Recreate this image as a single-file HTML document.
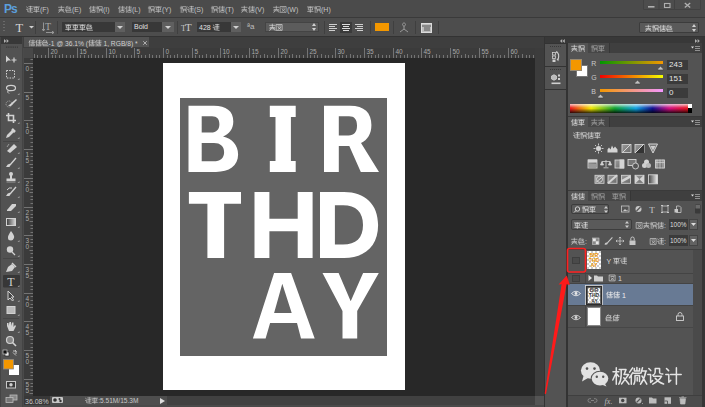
<!DOCTYPE html><html><head><meta charset="utf-8"><style>
html,body{margin:0;padding:0;width:705px;height:407px;overflow:hidden;background:#4a4a4a;font-family:"Liberation Sans",sans-serif;}
div,span,svg{position:absolute;}
span{white-space:nowrap;line-height:1;}
</style></head><body>
<div style="left:0px;top:0px;width:705px;height:17px;background:#4b4b4b;"></div>
<div style="left:0px;top:17px;width:705px;height:1px;background:#3a3a3a;"></div>
<span style="left:4px;top:2.5px;font-size:12px;color:#5b9fdc;font-weight:bold;letter-spacing:-1px;">Ps</span>
<svg style="left:0;top:0" width="705" height="407"><path transform="translate(26.00,5.98) scale(0.665)" d="M1 1.6 L2.4 2.8 M0.8 5 H2.6 V8.6 L9.6 9.6 M4.4 1 H9.4 M4.4 3.6 H9.4 M6.8 0.6 V8 M4.4 6 H9.4" fill="none" stroke="#c4c4c4" stroke-width="1.0" stroke-linecap="square"/><path transform="translate(33.00,5.98) scale(0.665)" d="M0.8 1.4 H9.4 M2 3.2 V6 H8.2 V3.2 Z M5 1.4 V9.6 M1.2 8.2 H9" fill="none" stroke="#c4c4c4" stroke-width="1.0" stroke-linecap="square"/><text x="40.00" y="12" font-size="7" font-family="Liberation Sans" fill="#c4c4c4" xml:space="preserve">(F)</text></svg>
<svg style="left:0;top:0" width="705" height="407"><path transform="translate(58.00,5.98) scale(0.665)" d="M1 2 H9 M5 0.4 V5.2 M1.8 5.2 H8.2 M3.2 7 L1.2 9.6 M6.8 7 L9 9.6 M1.4 7.2 H8.6" fill="none" stroke="#c4c4c4" stroke-width="1.0" stroke-linecap="square"/><path transform="translate(65.00,5.98) scale(0.665)" d="M3.4 0.4 L1 3 M2.6 1.8 H8 L6.8 4.2 M1.8 4.4 H8.6 V7 H1.8 Z M1.8 7 V9.4 H9.6" fill="none" stroke="#c4c4c4" stroke-width="1.0" stroke-linecap="square"/><text x="72.00" y="12" font-size="7" font-family="Liberation Sans" fill="#c4c4c4" xml:space="preserve">(E)</text></svg>
<svg style="left:0;top:0" width="705" height="407"><path transform="translate(89.00,5.98) scale(0.665)" d="M2.6 0.8 L1 3.8 M2 2.8 V9.6 M4.2 1.8 H9.6 M4.2 4.6 H9.6 M4.8 6.8 H9.2 V9.4 H4.8 Z M7 0.6 V6.8" fill="none" stroke="#c4c4c4" stroke-width="1.0" stroke-linecap="square"/><path transform="translate(96.00,5.98) scale(0.665)" d="M1.8 0.6 V9.6 M0.6 3 H3.2 M4.4 1 H9.4 V4.8 H4.4 Z M4.4 6.2 H9.6 M5.2 6.2 L4.4 9.6 M8.6 6.2 L9.6 9.6" fill="none" stroke="#c4c4c4" stroke-width="1.0" stroke-linecap="square"/><text x="103.00" y="12" font-size="7" font-family="Liberation Sans" fill="#c4c4c4" xml:space="preserve">(I)</text></svg>
<svg style="left:0;top:0" width="705" height="407"><path transform="translate(118.00,5.98) scale(0.665)" d="M2.6 0.8 L1 3.8 M2 2.8 V9.6 M4.2 1.8 H9.6 M4.2 4.6 H9.6 M4.8 6.8 H9.2 V9.4 H4.8 Z M7 0.6 V6.8" fill="none" stroke="#c4c4c4" stroke-width="1.0" stroke-linecap="square"/><path transform="translate(125.00,5.98) scale(0.665)" d="M2.6 0.8 L1 3.8 M2 2.8 V9.6 M4.2 1.8 H9.6 M4.2 4.6 H9.6 M4.8 6.8 H9.2 V9.4 H4.8 Z M7 0.6 V6.8" fill="none" stroke="#c4c4c4" stroke-width="1.0" stroke-linecap="square"/><text x="132.00" y="12" font-size="7" font-family="Liberation Sans" fill="#c4c4c4" xml:space="preserve">(L)</text></svg>
<svg style="left:0;top:0" width="705" height="407"><path transform="translate(148.00,5.98) scale(0.665)" d="M1.8 0.6 V9.6 M0.6 3 H3.2 M4.4 1 H9.4 V4.8 H4.4 Z M4.4 6.2 H9.6 M5.2 6.2 L4.4 9.6 M8.6 6.2 L9.6 9.6" fill="none" stroke="#c4c4c4" stroke-width="1.0" stroke-linecap="square"/><path transform="translate(155.00,5.98) scale(0.665)" d="M0.8 1.4 H9.4 M2 3.2 V6 H8.2 V3.2 Z M5 1.4 V9.6 M1.2 8.2 H9" fill="none" stroke="#c4c4c4" stroke-width="1.0" stroke-linecap="square"/><text x="162.00" y="12" font-size="7" font-family="Liberation Sans" fill="#c4c4c4" xml:space="preserve">(Y)</text></svg>
<svg style="left:0;top:0" width="705" height="407"><path transform="translate(180.00,5.98) scale(0.665)" d="M1.8 0.6 V9.6 M0.6 3 H3.2 M4.4 1 H9.4 V4.8 H4.4 Z M4.4 6.2 H9.6 M5.2 6.2 L4.4 9.6 M8.6 6.2 L9.6 9.6" fill="none" stroke="#c4c4c4" stroke-width="1.0" stroke-linecap="square"/><path transform="translate(187.00,5.98) scale(0.665)" d="M1 1.6 L2.4 2.8 M0.8 5 H2.6 V8.6 L9.6 9.6 M4.4 1 H9.4 M4.4 3.6 H9.4 M6.8 0.6 V8 M4.4 6 H9.4" fill="none" stroke="#c4c4c4" stroke-width="1.0" stroke-linecap="square"/><text x="194.00" y="12" font-size="7" font-family="Liberation Sans" fill="#c4c4c4" xml:space="preserve">(S)</text></svg>
<svg style="left:0;top:0" width="705" height="407"><path transform="translate(211.00,5.98) scale(0.665)" d="M1.8 0.6 V9.6 M0.6 3 H3.2 M4.4 1 H9.4 V4.8 H4.4 Z M4.4 6.2 H9.6 M5.2 6.2 L4.4 9.6 M8.6 6.2 L9.6 9.6" fill="none" stroke="#c4c4c4" stroke-width="1.0" stroke-linecap="square"/><path transform="translate(218.00,5.98) scale(0.665)" d="M2.6 0.8 L1 3.8 M2 2.8 V9.6 M4.2 1.8 H9.6 M4.2 4.6 H9.6 M4.8 6.8 H9.2 V9.4 H4.8 Z M7 0.6 V6.8" fill="none" stroke="#c4c4c4" stroke-width="1.0" stroke-linecap="square"/><text x="225.00" y="12" font-size="7" font-family="Liberation Sans" fill="#c4c4c4" xml:space="preserve">(T)</text></svg>
<svg style="left:0;top:0" width="705" height="407"><path transform="translate(241.00,5.98) scale(0.665)" d="M1 2 H9 M5 0.4 V5.2 M1.8 5.2 H8.2 M3.2 7 L1.2 9.6 M6.8 7 L9 9.6 M1.4 7.2 H8.6" fill="none" stroke="#c4c4c4" stroke-width="1.0" stroke-linecap="square"/><path transform="translate(248.00,5.98) scale(0.665)" d="M2.6 0.8 L1 3.8 M2 2.8 V9.6 M4.2 1.8 H9.6 M4.2 4.6 H9.6 M4.8 6.8 H9.2 V9.4 H4.8 Z M7 0.6 V6.8" fill="none" stroke="#c4c4c4" stroke-width="1.0" stroke-linecap="square"/><text x="255.00" y="12" font-size="7" font-family="Liberation Sans" fill="#c4c4c4" xml:space="preserve">(V)</text></svg>
<svg style="left:0;top:0" width="705" height="407"><path transform="translate(273.00,5.98) scale(0.665)" d="M1 2 H9 M5 0.4 V5.2 M1.8 5.2 H8.2 M3.2 7 L1.2 9.6 M6.8 7 L9 9.6 M1.4 7.2 H8.6" fill="none" stroke="#c4c4c4" stroke-width="1.0" stroke-linecap="square"/><path transform="translate(280.00,5.98) scale(0.665)" d="M1 0.8 H9.2 V9.6 H1 Z M3 3 H7.2 M3.2 5 L7 8 M7 5 L3.2 8" fill="none" stroke="#c4c4c4" stroke-width="1.0" stroke-linecap="square"/><text x="287.00" y="12" font-size="7" font-family="Liberation Sans" fill="#c4c4c4" xml:space="preserve">(W)</text></svg>
<svg style="left:0;top:0" width="705" height="407"><path transform="translate(307.00,5.98) scale(0.665)" d="M0.8 1.4 H9.4 M2 3.2 V6 H8.2 V3.2 Z M5 1.4 V9.6 M1.2 8.2 H9" fill="none" stroke="#c4c4c4" stroke-width="1.0" stroke-linecap="square"/><path transform="translate(314.00,5.98) scale(0.665)" d="M1.8 0.6 V9.6 M0.6 3 H3.2 M4.4 1 H9.4 V4.8 H4.4 Z M4.4 6.2 H9.6 M5.2 6.2 L4.4 9.6 M8.6 6.2 L9.6 9.6" fill="none" stroke="#c4c4c4" stroke-width="1.0" stroke-linecap="square"/><text x="321.00" y="12" font-size="7" font-family="Liberation Sans" fill="#c4c4c4" xml:space="preserve">(H)</text></svg>
<svg style="left:640px;top:0px" width="65" height="12"><path d="M3.5 0 V9.5 H60.5 V0 M19 0 V9.5 M34.5 0 V9.5" fill="#4d4d4d" stroke="#424242" stroke-width="1"/><g fill="none" stroke="#b0b0b0" stroke-width="1"><line x1="8" y1="6.8" x2="14.5" y2="6.8" stroke-width="1.6"/><rect x="24.5" y="3.5" width="5.5" height="4" stroke-width="1.1"/><path d="M44.8 3 L50.2 7.6 M50.2 3 L44.8 7.6" stroke-width="1.3"/></g></svg>
<div style="left:0px;top:18px;width:705px;height:18px;background:#4d4d4d;"></div>
<div style="left:0px;top:36px;width:705px;height:1px;background:#333333;"></div>
<svg style="left:3px;top:20px" width="3" height="14"><g fill="#6a6a6a"><rect x="0" y="1" width="2" height="1"/><rect x="0" y="4" width="2" height="1"/><rect x="0" y="7" width="2" height="1"/><rect x="0" y="10" width="2" height="1"/></g></svg>
<span style="left:15.5px;top:21.5px;font-size:12.5px;color:#d4d4d4;font-family:'Liberation Serif';">T</span>
<svg style="left:28.5px;top:25.5px" width="5" height="3"><path d="M0 0H5L2.5 2.5Z" fill="#cfcfcf"/></svg>
<div style="left:35px;top:21px;width:1px;height:13px;background:#3f3f3f;"></div>
<span style="left:45px;top:22px;font-size:10px;color:#a8a8a8;font-family:'Liberation Serif';">T</span>
<svg style="left:41px;top:22px" width="14" height="12"><path d="M2.5 0.5V8.5 M1.2 7L2.5 9L3.8 7 M5 10.5H12.5 M11 9.2L13 10.5L11 11.8" stroke="#a8a8a8" fill="none" stroke-width="0.8"/></svg>
<div style="left:57px;top:21px;width:1px;height:13px;background:#3f3f3f;"></div>
<div style="left:62px;top:22px;width:53px;height:10px;background:#383838;"></div>
<svg style="left:0;top:0" width="705" height="407"><path transform="translate(65.00,23.98) scale(0.665)" d="M0.8 1.4 H9.4 M2 3.2 V6 H8.2 V3.2 Z M5 1.4 V9.6 M1.2 8.2 H9" fill="none" stroke="#e0e0e0" stroke-width="1.0" stroke-linecap="square"/><path transform="translate(72.00,23.98) scale(0.665)" d="M0.8 1.4 H9.4 M2 3.2 V6 H8.2 V3.2 Z M5 1.4 V9.6 M1.2 8.2 H9" fill="none" stroke="#e0e0e0" stroke-width="1.0" stroke-linecap="square"/><path transform="translate(79.00,23.98) scale(0.665)" d="M0.8 1.4 H9.4 M2 3.2 V6 H8.2 V3.2 Z M5 1.4 V9.6 M1.2 8.2 H9" fill="none" stroke="#e0e0e0" stroke-width="1.0" stroke-linecap="square"/><path transform="translate(86.00,23.98) scale(0.665)" d="M3.4 0.4 L1 3 M2.6 1.8 H8 L6.8 4.2 M1.8 4.4 H8.6 V7 H1.8 Z M1.8 7 V9.4 H9.6" fill="none" stroke="#e0e0e0" stroke-width="1.0" stroke-linecap="square"/></svg>
<div style="left:115px;top:22px;width:10px;height:10px;background:#5f5f5f;"></div>
<svg style="left:117px;top:26px" width="6" height="3"><path d="M0 0H6L3 3Z" fill="#d0d0d0"/></svg>
<div style="left:132px;top:22px;width:30px;height:10px;background:#383838;"></div>
<span style="left:134px;top:23px;font-size:7px;color:#e0e0e0;">Bold</span>
<div style="left:162px;top:22px;width:12px;height:10px;background:#5f5f5f;"></div>
<svg style="left:165px;top:26px" width="6" height="3"><path d="M0 0H6L3 3Z" fill="#d0d0d0"/></svg>
<div style="left:177px;top:21px;width:1px;height:13px;background:#3f3f3f;"></div>
<span style="left:181px;top:25px;font-size:8px;color:#c8c8c8;font-family:'Liberation Serif';">T</span>
<span style="left:185px;top:21.5px;font-size:11px;color:#c8c8c8;font-family:'Liberation Serif';">T</span>
<div style="left:197px;top:22px;width:34px;height:10px;background:#383838;"></div>
<svg style="left:0;top:0" width="705" height="407"><text x="199.00" y="30" font-size="7" font-family="Liberation Sans" fill="#e0e0e0" xml:space="preserve">428 </text><path transform="translate(212.62,23.98) scale(0.665)" d="M1 1.6 L2.4 2.8 M0.8 5 H2.6 V8.6 L9.6 9.6 M4.4 1 H9.4 M4.4 3.6 H9.4 M6.8 0.6 V8 M4.4 6 H9.4" fill="none" stroke="#e0e0e0" stroke-width="1.0" stroke-linecap="square"/></svg>
<div style="left:231px;top:22px;width:10px;height:10px;background:#5f5f5f;"></div>
<svg style="left:233px;top:26px" width="6" height="3"><path d="M0 0H6L3 3Z" fill="#d0d0d0"/></svg>
<span style="left:247px;top:23px;font-size:8px;color:#bdbdbd;">ªa</span>
<div style="left:265px;top:22px;width:54px;height:10px;background:#5c5c5c;border:1px solid #444;box-sizing:border-box;"></div>
<svg style="left:0;top:0" width="705" height="407"><path transform="translate(269.00,23.98) scale(0.665)" d="M1 2 H9 M5 0.4 V5.2 M1.8 5.2 H8.2 M3.2 7 L1.2 9.6 M6.8 7 L9 9.6 M1.4 7.2 H8.6" fill="none" stroke="#e0e0e0" stroke-width="1.0" stroke-linecap="square"/><path transform="translate(276.00,23.98) scale(0.665)" d="M1 0.8 H9.2 V9.6 H1 Z M3 3 H7.2 M3.2 5 L7 8 M7 5 L3.2 8" fill="none" stroke="#e0e0e0" stroke-width="1.0" stroke-linecap="square"/></svg>
<svg style="left:312px;top:23px" width="4" height="8"><path d="M0 3L2 0L4 3Z M0 5L2 8L4 5Z" fill="#d0d0d0"/></svg>
<div style="left:324px;top:21px;width:1px;height:13px;background:#3f3f3f;"></div>
<svg style="left:328px;top:22px" width="40" height="11"><g stroke="#cfcfcf" stroke-width="1"><path d="M1 2.5H9 M1 4.5H7 M1 6.5H9 M1 8.5H7"/></g><rect x="12" y="0" width="12" height="11" fill="#3a3a3a"/><g stroke="#dcdcdc"><path d="M14 2.5H22 M15 4.5H21 M14 6.5H22 M15 8.5H21"/></g><g stroke="#cfcfcf"><path d="M27 2.5H35 M29 4.5H35 M27 6.5H35 M29 8.5H35"/></g></svg>
<div style="left:370px;top:21px;width:1px;height:13px;background:#3f3f3f;"></div>
<div style="left:375px;top:23px;width:14px;height:8px;background:#f39700;"></div>
<div style="left:393px;top:21px;width:1px;height:13px;background:#3f3f3f;"></div>
<svg style="left:399px;top:22px" width="11" height="11"><path d="M5 1C3 1 3 4 5 4C7 4 7 1 5 1 M5 4V7 M1 10L5 7L9 10" stroke="#9a9a9a" fill="none"/></svg>
<div style="left:415px;top:21px;width:1px;height:13px;background:#3f3f3f;"></div>
<svg style="left:421px;top:22px" width="11" height="11"><rect x="0.5" y="1.5" width="10" height="9" fill="#bdbdbd" stroke="#dcdcdc"/><path d="M1 4H10 M3 6H9 M3 8H9" stroke="#555"/></svg>
<div style="left:438px;top:21px;width:1px;height:13px;background:#3f3f3f;"></div>
<div style="left:639px;top:22px;width:60px;height:11px;background:#5a5a5a;border:1px solid #3c3c3c;box-sizing:border-box;border-radius:1px;"></div>
<svg style="left:0;top:0" width="705" height="407"><path transform="translate(645.00,24.98) scale(0.665)" d="M1 2 H9 M5 0.4 V5.2 M1.8 5.2 H8.2 M3.2 7 L1.2 9.6 M6.8 7 L9 9.6 M1.4 7.2 H8.6" fill="none" stroke="#e0e0e0" stroke-width="1.0" stroke-linecap="square"/><path transform="translate(652.00,24.98) scale(0.665)" d="M1.8 0.6 V9.6 M0.6 3 H3.2 M4.4 1 H9.4 V4.8 H4.4 Z M4.4 6.2 H9.6 M5.2 6.2 L4.4 9.6 M8.6 6.2 L9.6 9.6" fill="none" stroke="#e0e0e0" stroke-width="1.0" stroke-linecap="square"/><path transform="translate(659.00,24.98) scale(0.665)" d="M2.6 0.8 L1 3.8 M2 2.8 V9.6 M4.2 1.8 H9.6 M4.2 4.6 H9.6 M4.8 6.8 H9.2 V9.4 H4.8 Z M7 0.6 V6.8" fill="none" stroke="#e0e0e0" stroke-width="1.0" stroke-linecap="square"/><path transform="translate(666.00,24.98) scale(0.665)" d="M3.4 0.4 L1 3 M2.6 1.8 H8 L6.8 4.2 M1.8 4.4 H8.6 V7 H1.8 Z M1.8 7 V9.4 H9.6" fill="none" stroke="#e0e0e0" stroke-width="1.0" stroke-linecap="square"/></svg>
<svg style="left:692px;top:24px" width="4" height="8"><path d="M0 3L2 0L4 3Z M0 5L2 8L4 5Z" fill="#d0d0d0"/></svg>
<div style="left:0px;top:37px;width:23px;height:370px;background:#444444;"></div>
<div style="left:1px;top:37px;width:21px;height:7px;background:#383838;"></div>
<svg style="left:3.5px;top:38.5px" width="5" height="4"><path d="M2.2 2 L0 0 V4Z M4.8 2 L2.6 0 V4Z" fill="#b0b0b0"/></svg>
<div style="left:1px;top:44px;width:21px;height:363px;background:#525252;"></div>
<svg style="left:5px;top:45.5px" width="14" height="3"><g stroke="#3a3a3a" stroke-width="1.3" stroke-dasharray="1.3 0.9"><path d="M1 1.2 H13"/></g></svg>
<svg style="left:0;top:0" width="23" height="407"><path d="M6 55.5 L6 62.5 L8 60.5 L11 60.5 Z" fill="#d2d2d2"/><path d="M11.5 60 h5 M14 57.5 v5" stroke="#d2d2d2" stroke-width="1.2"/><rect x="6.5" y="70.5" width="8" height="7.5" fill="none" stroke="#d2d2d2" stroke-dasharray="1.5 1.2"/><path d="M17.5 80 h2 v-2 z" fill="#9a9a9a"/><ellipse cx="11" cy="88" rx="4.5" ry="2.7" fill="none" stroke="#d2d2d2" stroke-width="1.2"/><path d="M8 90.5 q-1 2 1 3" fill="none" stroke="#d2d2d2"/><path d="M17.5 95 h2 v-2 z" fill="#9a9a9a"/><circle cx="9" cy="104" r="3" fill="none" stroke="#aaa" stroke-dasharray="1 1"/><path d="M8 106 L16 99 L17 100 L11 106 Z" fill="#d2d2d2"/><path d="M17.5 109 h2 v-2 z" fill="#9a9a9a"/><path d="M8.5 113 V120.5 H16 M6 115.5 H13.5 V123" fill="none" stroke="#d2d2d2" stroke-width="1.6"/><path d="M17.5 124 h2 v-2 z" fill="#9a9a9a"/><path d="M6 138 L7 135 L12 130 L14 132 L9 137 Z" fill="#d2d2d2"/><path d="M12 129 L15 132" stroke="#d2d2d2" stroke-width="2.5"/><path d="M17.5 139 h2 v-2 z" fill="#9a9a9a"/><rect x="3" y="141" width="16" height="1" fill="#464646"/><path d="M7 151 L14 144 L17 147 L10 153 Z" fill="#d2d2d2"/><path d="M7 147 L9 144" stroke="#999"/><path d="M17.5 154 h2 v-2 z" fill="#9a9a9a"/><path d="M16 158 L10 165" stroke="#d2d2d2" stroke-width="1.3"/><path d="M6 167 Q8 163 11 164 L9.5 167 Z" fill="#d2d2d2"/><path d="M17.5 169 h2 v-2 z" fill="#9a9a9a"/><circle cx="11" cy="174" r="2" fill="#d2d2d2"/><rect x="10" y="175" width="2" height="4" fill="#d2d2d2"/><rect x="6.5" y="178.5" width="9" height="2.5" fill="#d2d2d2"/><rect x="6.5" y="181.5" width="9" height="1" fill="#999"/><path d="M17.5 183 h2 v-2 z" fill="#9a9a9a"/><path d="M16 187 L10 194" stroke="#d2d2d2" stroke-width="1.3"/><path d="M6 196 Q8 192 11 193 L9.5 196 Z" fill="#d2d2d2"/><path d="M7 190 q2 -3 5 -2" fill="none" stroke="#d2d2d2"/><path d="M17.5 198 h2 v-2 z" fill="#9a9a9a"/><path d="M7 210 L12 204 L16 204 L16 206 L11 211 L7 211 Z" fill="#d2d2d2"/><path d="M17.5 213 h2 v-2 z" fill="#9a9a9a"/><defs><linearGradient id="gr" x1="0" x2="1"><stop offset="0" stop-color="#3a3a3a"/><stop offset="1" stop-color="#dadada"/></linearGradient></defs><rect x="6.5" y="218.5" width="9" height="7" fill="url(#gr)" stroke="#d2d2d2"/><path d="M17.5 228 h2 v-2 z" fill="#9a9a9a"/><path d="M11 231 Q15 236 14 238 Q13 240.5 11 240.5 Q8 240.5 8 238 Q7.5 236 11 231 Z" fill="#d2d2d2"/><path d="M17.5 242 h2 v-2 z" fill="#9a9a9a"/><circle cx="10" cy="249.5" r="3.2" fill="#d2d2d2"/><path d="M12 252 L15 255" stroke="#d2d2d2" stroke-width="1.3"/><path d="M17.5 257 h2 v-2 z" fill="#9a9a9a"/><rect x="3" y="258" width="16" height="1" fill="#464646"/><path d="M6 272 L8 267 L12 264 L15 267 L12 271 Z" fill="#d2d2d2"/><path d="M12 263 L16 267" stroke="#d2d2d2" stroke-width="1.5"/><path d="M17.5 273 h2 v-2 z" fill="#9a9a9a"/><rect x="3" y="275" width="17" height="12.5" fill="#373737" rx="1"/><text x="11" y="285.5" font-size="12" font-family="Liberation Serif" fill="#d2d2d2" text-anchor="middle">T</text><path d="M17.5 287 h2 v-2 z" fill="#9a9a9a"/><path d="M8 291 L8 300 L10 298 L12.5 301 L13.5 300 L11.5 297 L14 297 Z" fill="#444" stroke="#d2d2d2"/><path d="M17.5 302 h2 v-2 z" fill="#9a9a9a"/><rect x="7" y="306.5" width="8" height="7" fill="#bbb" stroke="#d2d2d2"/><path d="M17.5 316 h2 v-2 z" fill="#9a9a9a"/><rect x="3" y="318" width="16" height="1" fill="#464646"/><path d="M7 326 L7 323 L8.5 323 L8.5 326 L9.5 322 L11 322 L11 326 L12 322.5 L13.5 322.5 L13.5 327 L15 325 L16 326 L13.5 331 L9 331 Z" fill="#d2d2d2"/><path d="M17.5 333 h2 v-2 z" fill="#9a9a9a"/><circle cx="10" cy="340" r="3.5" fill="#888" stroke="#d2d2d2" stroke-width="1.2"/><path d="M12.5 342.5 L16 346" stroke="#d2d2d2" stroke-width="1.6"/><rect x="5" y="352" width="4" height="4" fill="#eee" stroke="#222" stroke-width="0.7"/><rect x="3" y="350" width="4" height="4" fill="#111" stroke="#ccc" stroke-width="0.7"/><path d="M13 351 h3 v3 M15 350 l1.5 1.5 M13 352.5 l3 3" fill="none" stroke="#cfcfcf" stroke-width="0.9"/><rect x="9" y="365" width="10" height="10" fill="#ffffff"/><rect x="3.5" y="359.5" width="10" height="9.5" fill="#f39700" stroke="#8a8a8a" stroke-width="0.8"/><rect x="6.5" y="381.5" width="9" height="6.5" fill="#3a3a3a" stroke="#c8c8c8"/><circle cx="11" cy="384.7" r="1.7" fill="#d0d0d0"/><rect x="10" y="395" width="7" height="5" fill="#888" stroke="#bbb" stroke-width="0.8"/><rect x="6" y="397.5" width="7" height="5" fill="#777" stroke="#bbb" stroke-width="0.8"/></svg>
<div style="left:23px;top:37px;width:521px;height:11px;background:#3e3e3e;"></div>
<div style="left:24px;top:37px;width:125px;height:10px;background:#535353;"></div>
<svg style="left:0;top:0" width="705" height="407"><path transform="translate(28.50,39.74) scale(0.636)" d="M2.6 0.8 L1 3.8 M2 2.8 V9.6 M4.2 1.8 H9.6 M4.2 4.6 H9.6 M4.8 6.8 H9.2 V9.4 H4.8 Z M7 0.6 V6.8" fill="none" stroke="#d0d0d0" stroke-width="1.0" stroke-linecap="square"/><path transform="translate(35.20,39.74) scale(0.636)" d="M2.6 0.8 L1 3.8 M2 2.8 V9.6 M4.2 1.8 H9.6 M4.2 4.6 H9.6 M4.8 6.8 H9.2 V9.4 H4.8 Z M7 0.6 V6.8" fill="none" stroke="#d0d0d0" stroke-width="1.0" stroke-linecap="square"/><path transform="translate(41.90,39.74) scale(0.636)" d="M3.4 0.4 L1 3 M2.6 1.8 H8 L6.8 4.2 M1.8 4.4 H8.6 V7 H1.8 Z M1.8 7 V9.4 H9.6" fill="none" stroke="#d0d0d0" stroke-width="1.0" stroke-linecap="square"/><text x="48.60" y="45.5" font-size="6.7" font-family="Liberation Sans" fill="#d0d0d0" xml:space="preserve">-1 @ 36.1% (</text><path transform="translate(88.17,39.74) scale(0.636)" d="M2.6 0.8 L1 3.8 M2 2.8 V9.6 M4.2 1.8 H9.6 M4.2 4.6 H9.6 M4.8 6.8 H9.2 V9.4 H4.8 Z M7 0.6 V6.8" fill="none" stroke="#d0d0d0" stroke-width="1.0" stroke-linecap="square"/><path transform="translate(94.87,39.74) scale(0.636)" d="M2.6 0.8 L1 3.8 M2 2.8 V9.6 M4.2 1.8 H9.6 M4.2 4.6 H9.6 M4.8 6.8 H9.2 V9.4 H4.8 Z M7 0.6 V6.8" fill="none" stroke="#d0d0d0" stroke-width="1.0" stroke-linecap="square"/><text x="101.57" y="45.5" font-size="6.7" font-family="Liberation Sans" fill="#d0d0d0" xml:space="preserve"> 1, RGB/8) *</text></svg>
<svg style="left:142px;top:39.5px" width="6" height="6"><path d="M1.2 1.2 L4.8 4.8 M4.8 1.2 L1.2 4.8" stroke="#b8b8b8" stroke-width="0.9"/></svg>
<div style="left:24px;top:48px;width:511px;height:10px;background:#3b3b3b;"></div>
<div style="left:24px;top:48px;width:9px;height:348px;background:#3b3b3b;"></div>
<div style="left:24px;top:48px;width:9px;height:10px;background:#484848;"></div>
<div style="left:33px;top:58px;width:502px;height:338px;background:#282828;"></div>
<svg style="left:0;top:0" width="705" height="407"><g stroke="#747474" stroke-width="1"><line x1="34.5" y1="54" x2="34.5" y2="58"/><line x1="37.5" y1="55" x2="37.5" y2="58"/><line x1="41.5" y1="55" x2="41.5" y2="58"/><line x1="45.5" y1="55" x2="45.5" y2="58"/><line x1="48.5" y1="48" x2="48.5" y2="58"/><line x1="52.5" y1="55" x2="52.5" y2="58"/><line x1="55.5" y1="55" x2="55.5" y2="58"/><line x1="59.5" y1="55" x2="59.5" y2="58"/><line x1="62.5" y1="54" x2="62.5" y2="58"/><line x1="66.5" y1="55" x2="66.5" y2="58"/><line x1="70.5" y1="55" x2="70.5" y2="58"/><line x1="73.5" y1="55" x2="73.5" y2="58"/><line x1="77.5" y1="48" x2="77.5" y2="58"/><line x1="80.5" y1="55" x2="80.5" y2="58"/><line x1="84.5" y1="55" x2="84.5" y2="58"/><line x1="88.5" y1="55" x2="88.5" y2="58"/><line x1="91.5" y1="54" x2="91.5" y2="58"/><line x1="95.5" y1="55" x2="95.5" y2="58"/><line x1="98.5" y1="55" x2="98.5" y2="58"/><line x1="102.5" y1="55" x2="102.5" y2="58"/><line x1="106.5" y1="48" x2="106.5" y2="58"/><line x1="109.5" y1="55" x2="109.5" y2="58"/><line x1="113.5" y1="55" x2="113.5" y2="58"/><line x1="116.5" y1="55" x2="116.5" y2="58"/><line x1="120.5" y1="54" x2="120.5" y2="58"/><line x1="124.5" y1="55" x2="124.5" y2="58"/><line x1="127.5" y1="55" x2="127.5" y2="58"/><line x1="131.5" y1="55" x2="131.5" y2="58"/><line x1="134.5" y1="48" x2="134.5" y2="58"/><line x1="138.5" y1="55" x2="138.5" y2="58"/><line x1="141.5" y1="55" x2="141.5" y2="58"/><line x1="145.5" y1="55" x2="145.5" y2="58"/><line x1="149.5" y1="54" x2="149.5" y2="58"/><line x1="152.5" y1="55" x2="152.5" y2="58"/><line x1="156.5" y1="55" x2="156.5" y2="58"/><line x1="159.5" y1="55" x2="159.5" y2="58"/><line x1="163.5" y1="48" x2="163.5" y2="58"/><line x1="167.5" y1="55" x2="167.5" y2="58"/><line x1="170.5" y1="55" x2="170.5" y2="58"/><line x1="174.5" y1="55" x2="174.5" y2="58"/><line x1="177.5" y1="54" x2="177.5" y2="58"/><line x1="181.5" y1="55" x2="181.5" y2="58"/><line x1="185.5" y1="55" x2="185.5" y2="58"/><line x1="188.5" y1="55" x2="188.5" y2="58"/><line x1="192.5" y1="48" x2="192.5" y2="58"/><line x1="195.5" y1="55" x2="195.5" y2="58"/><line x1="199.5" y1="55" x2="199.5" y2="58"/><line x1="202.5" y1="55" x2="202.5" y2="58"/><line x1="206.5" y1="54" x2="206.5" y2="58"/><line x1="210.5" y1="55" x2="210.5" y2="58"/><line x1="213.5" y1="55" x2="213.5" y2="58"/><line x1="217.5" y1="55" x2="217.5" y2="58"/><line x1="220.5" y1="48" x2="220.5" y2="58"/><line x1="224.5" y1="55" x2="224.5" y2="58"/><line x1="228.5" y1="55" x2="228.5" y2="58"/><line x1="231.5" y1="55" x2="231.5" y2="58"/><line x1="235.5" y1="54" x2="235.5" y2="58"/><line x1="238.5" y1="55" x2="238.5" y2="58"/><line x1="242.5" y1="55" x2="242.5" y2="58"/><line x1="246.5" y1="55" x2="246.5" y2="58"/><line x1="249.5" y1="48" x2="249.5" y2="58"/><line x1="253.5" y1="55" x2="253.5" y2="58"/><line x1="256.5" y1="55" x2="256.5" y2="58"/><line x1="260.5" y1="55" x2="260.5" y2="58"/><line x1="264.5" y1="54" x2="264.5" y2="58"/><line x1="267.5" y1="55" x2="267.5" y2="58"/><line x1="271.5" y1="55" x2="271.5" y2="58"/><line x1="274.5" y1="55" x2="274.5" y2="58"/><line x1="278.5" y1="48" x2="278.5" y2="58"/><line x1="281.5" y1="55" x2="281.5" y2="58"/><line x1="285.5" y1="55" x2="285.5" y2="58"/><line x1="289.5" y1="55" x2="289.5" y2="58"/><line x1="292.5" y1="54" x2="292.5" y2="58"/><line x1="296.5" y1="55" x2="296.5" y2="58"/><line x1="299.5" y1="55" x2="299.5" y2="58"/><line x1="303.5" y1="55" x2="303.5" y2="58"/><line x1="307.5" y1="48" x2="307.5" y2="58"/><line x1="310.5" y1="55" x2="310.5" y2="58"/><line x1="314.5" y1="55" x2="314.5" y2="58"/><line x1="317.5" y1="55" x2="317.5" y2="58"/><line x1="321.5" y1="54" x2="321.5" y2="58"/><line x1="325.5" y1="55" x2="325.5" y2="58"/><line x1="328.5" y1="55" x2="328.5" y2="58"/><line x1="332.5" y1="55" x2="332.5" y2="58"/><line x1="335.5" y1="48" x2="335.5" y2="58"/><line x1="339.5" y1="55" x2="339.5" y2="58"/><line x1="342.5" y1="55" x2="342.5" y2="58"/><line x1="346.5" y1="55" x2="346.5" y2="58"/><line x1="350.5" y1="54" x2="350.5" y2="58"/><line x1="353.5" y1="55" x2="353.5" y2="58"/><line x1="357.5" y1="55" x2="357.5" y2="58"/><line x1="360.5" y1="55" x2="360.5" y2="58"/><line x1="364.5" y1="48" x2="364.5" y2="58"/><line x1="368.5" y1="55" x2="368.5" y2="58"/><line x1="371.5" y1="55" x2="371.5" y2="58"/><line x1="375.5" y1="55" x2="375.5" y2="58"/><line x1="378.5" y1="54" x2="378.5" y2="58"/><line x1="382.5" y1="55" x2="382.5" y2="58"/><line x1="386.5" y1="55" x2="386.5" y2="58"/><line x1="389.5" y1="55" x2="389.5" y2="58"/><line x1="393.5" y1="48" x2="393.5" y2="58"/><line x1="396.5" y1="55" x2="396.5" y2="58"/><line x1="400.5" y1="55" x2="400.5" y2="58"/><line x1="404.5" y1="55" x2="404.5" y2="58"/><line x1="407.5" y1="54" x2="407.5" y2="58"/><line x1="411.5" y1="55" x2="411.5" y2="58"/><line x1="414.5" y1="55" x2="414.5" y2="58"/><line x1="418.5" y1="55" x2="418.5" y2="58"/><line x1="421.5" y1="48" x2="421.5" y2="58"/><line x1="425.5" y1="55" x2="425.5" y2="58"/><line x1="429.5" y1="55" x2="429.5" y2="58"/><line x1="432.5" y1="55" x2="432.5" y2="58"/><line x1="436.5" y1="54" x2="436.5" y2="58"/><line x1="439.5" y1="55" x2="439.5" y2="58"/><line x1="443.5" y1="55" x2="443.5" y2="58"/><line x1="447.5" y1="55" x2="447.5" y2="58"/><line x1="450.5" y1="48" x2="450.5" y2="58"/><line x1="454.5" y1="55" x2="454.5" y2="58"/><line x1="457.5" y1="55" x2="457.5" y2="58"/><line x1="461.5" y1="55" x2="461.5" y2="58"/><line x1="465.5" y1="54" x2="465.5" y2="58"/><line x1="468.5" y1="55" x2="468.5" y2="58"/><line x1="472.5" y1="55" x2="472.5" y2="58"/><line x1="475.5" y1="55" x2="475.5" y2="58"/><line x1="479.5" y1="48" x2="479.5" y2="58"/><line x1="483.5" y1="55" x2="483.5" y2="58"/><line x1="486.5" y1="55" x2="486.5" y2="58"/><line x1="490.5" y1="55" x2="490.5" y2="58"/><line x1="493.5" y1="54" x2="493.5" y2="58"/><line x1="497.5" y1="55" x2="497.5" y2="58"/><line x1="500.5" y1="55" x2="500.5" y2="58"/><line x1="504.5" y1="55" x2="504.5" y2="58"/><line x1="508.5" y1="48" x2="508.5" y2="58"/><line x1="511.5" y1="55" x2="511.5" y2="58"/><line x1="515.5" y1="55" x2="515.5" y2="58"/><line x1="518.5" y1="55" x2="518.5" y2="58"/><line x1="522.5" y1="54" x2="522.5" y2="58"/><line x1="526.5" y1="55" x2="526.5" y2="58"/><line x1="529.5" y1="55" x2="529.5" y2="58"/><line x1="533.5" y1="55" x2="533.5" y2="58"/><line x1="30.5" y1="59.5" x2="33" y2="59.5"/><line x1="24" y1="63.5" x2="33" y2="63.5"/><line x1="30.5" y1="67.5" x2="33" y2="67.5"/><line x1="30.5" y1="70.5" x2="33" y2="70.5"/><line x1="30.5" y1="74.5" x2="33" y2="74.5"/><line x1="29.5" y1="77.5" x2="33" y2="77.5"/><line x1="30.5" y1="81.5" x2="33" y2="81.5"/><line x1="30.5" y1="85.5" x2="33" y2="85.5"/><line x1="30.5" y1="88.5" x2="33" y2="88.5"/><line x1="24" y1="92.5" x2="33" y2="92.5"/><line x1="30.5" y1="95.5" x2="33" y2="95.5"/><line x1="30.5" y1="99.5" x2="33" y2="99.5"/><line x1="30.5" y1="102.5" x2="33" y2="102.5"/><line x1="29.5" y1="106.5" x2="33" y2="106.5"/><line x1="30.5" y1="110.5" x2="33" y2="110.5"/><line x1="30.5" y1="113.5" x2="33" y2="113.5"/><line x1="30.5" y1="117.5" x2="33" y2="117.5"/><line x1="24" y1="120.5" x2="33" y2="120.5"/><line x1="30.5" y1="124.5" x2="33" y2="124.5"/><line x1="30.5" y1="128.5" x2="33" y2="128.5"/><line x1="30.5" y1="131.5" x2="33" y2="131.5"/><line x1="29.5" y1="135.5" x2="33" y2="135.5"/><line x1="30.5" y1="138.5" x2="33" y2="138.5"/><line x1="30.5" y1="142.5" x2="33" y2="142.5"/><line x1="30.5" y1="146.5" x2="33" y2="146.5"/><line x1="24" y1="149.5" x2="33" y2="149.5"/><line x1="30.5" y1="153.5" x2="33" y2="153.5"/><line x1="30.5" y1="156.5" x2="33" y2="156.5"/><line x1="30.5" y1="160.5" x2="33" y2="160.5"/><line x1="29.5" y1="164.5" x2="33" y2="164.5"/><line x1="30.5" y1="167.5" x2="33" y2="167.5"/><line x1="30.5" y1="171.5" x2="33" y2="171.5"/><line x1="30.5" y1="174.5" x2="33" y2="174.5"/><line x1="24" y1="178.5" x2="33" y2="178.5"/><line x1="30.5" y1="181.5" x2="33" y2="181.5"/><line x1="30.5" y1="185.5" x2="33" y2="185.5"/><line x1="30.5" y1="189.5" x2="33" y2="189.5"/><line x1="29.5" y1="192.5" x2="33" y2="192.5"/><line x1="30.5" y1="196.5" x2="33" y2="196.5"/><line x1="30.5" y1="199.5" x2="33" y2="199.5"/><line x1="30.5" y1="203.5" x2="33" y2="203.5"/><line x1="24" y1="207.5" x2="33" y2="207.5"/><line x1="30.5" y1="210.5" x2="33" y2="210.5"/><line x1="30.5" y1="214.5" x2="33" y2="214.5"/><line x1="30.5" y1="217.5" x2="33" y2="217.5"/><line x1="29.5" y1="221.5" x2="33" y2="221.5"/><line x1="30.5" y1="225.5" x2="33" y2="225.5"/><line x1="30.5" y1="228.5" x2="33" y2="228.5"/><line x1="30.5" y1="232.5" x2="33" y2="232.5"/><line x1="24" y1="235.5" x2="33" y2="235.5"/><line x1="30.5" y1="239.5" x2="33" y2="239.5"/><line x1="30.5" y1="242.5" x2="33" y2="242.5"/><line x1="30.5" y1="246.5" x2="33" y2="246.5"/><line x1="29.5" y1="250.5" x2="33" y2="250.5"/><line x1="30.5" y1="253.5" x2="33" y2="253.5"/><line x1="30.5" y1="257.5" x2="33" y2="257.5"/><line x1="30.5" y1="260.5" x2="33" y2="260.5"/><line x1="24" y1="264.5" x2="33" y2="264.5"/><line x1="30.5" y1="268.5" x2="33" y2="268.5"/><line x1="30.5" y1="271.5" x2="33" y2="271.5"/><line x1="30.5" y1="275.5" x2="33" y2="275.5"/><line x1="29.5" y1="278.5" x2="33" y2="278.5"/><line x1="30.5" y1="282.5" x2="33" y2="282.5"/><line x1="30.5" y1="286.5" x2="33" y2="286.5"/><line x1="30.5" y1="289.5" x2="33" y2="289.5"/><line x1="24" y1="293.5" x2="33" y2="293.5"/><line x1="30.5" y1="296.5" x2="33" y2="296.5"/><line x1="30.5" y1="300.5" x2="33" y2="300.5"/><line x1="30.5" y1="304.5" x2="33" y2="304.5"/><line x1="29.5" y1="307.5" x2="33" y2="307.5"/><line x1="30.5" y1="311.5" x2="33" y2="311.5"/><line x1="30.5" y1="314.5" x2="33" y2="314.5"/><line x1="30.5" y1="318.5" x2="33" y2="318.5"/><line x1="24" y1="321.5" x2="33" y2="321.5"/><line x1="30.5" y1="325.5" x2="33" y2="325.5"/><line x1="30.5" y1="329.5" x2="33" y2="329.5"/><line x1="30.5" y1="332.5" x2="33" y2="332.5"/><line x1="29.5" y1="336.5" x2="33" y2="336.5"/><line x1="30.5" y1="339.5" x2="33" y2="339.5"/><line x1="30.5" y1="343.5" x2="33" y2="343.5"/><line x1="30.5" y1="347.5" x2="33" y2="347.5"/><line x1="24" y1="350.5" x2="33" y2="350.5"/><line x1="30.5" y1="354.5" x2="33" y2="354.5"/><line x1="30.5" y1="357.5" x2="33" y2="357.5"/><line x1="30.5" y1="361.5" x2="33" y2="361.5"/><line x1="29.5" y1="365.5" x2="33" y2="365.5"/><line x1="30.5" y1="368.5" x2="33" y2="368.5"/><line x1="30.5" y1="372.5" x2="33" y2="372.5"/><line x1="30.5" y1="375.5" x2="33" y2="375.5"/><line x1="24" y1="379.5" x2="33" y2="379.5"/><line x1="30.5" y1="383.5" x2="33" y2="383.5"/><line x1="30.5" y1="386.5" x2="33" y2="386.5"/><line x1="30.5" y1="390.5" x2="33" y2="390.5"/><line x1="29.5" y1="393.5" x2="33" y2="393.5"/></g><g fill="#a8a8a8" font-size="6.5" font-family="Liberation Sans"><text x="50.5" y="54">20</text><text x="79.5" y="54">15</text><text x="108.5" y="54">10</text><text x="136.5" y="54">5</text><text x="165.5" y="54">0</text><text x="194.5" y="54">5</text><text x="222.5" y="54">10</text><text x="251.5" y="54">15</text><text x="280.5" y="54">20</text><text x="309.5" y="54">25</text><text x="337.5" y="54">30</text><text x="366.5" y="54">35</text><text x="395.5" y="54">40</text><text x="423.5" y="54">45</text><text x="452.5" y="54">50</text><text x="481.5" y="54">55</text><text x="510.5" y="54">60</text><text x="25.5" y="71">0</text><text x="25.5" y="100">5</text><text x="25.5" y="128">1</text><text x="25.5" y="134">0</text><text x="25.5" y="157">1</text><text x="25.5" y="163">5</text><text x="25.5" y="186">2</text><text x="25.5" y="192">0</text><text x="25.5" y="215">2</text><text x="25.5" y="221">5</text><text x="25.5" y="243">3</text><text x="25.5" y="249">0</text><text x="25.5" y="272">3</text><text x="25.5" y="278">5</text><text x="25.5" y="301">4</text><text x="25.5" y="307">0</text><text x="25.5" y="329">4</text><text x="25.5" y="335">5</text><text x="25.5" y="358">5</text><text x="25.5" y="364">0</text><text x="25.5" y="387">5</text><text x="25.5" y="393">5</text></g></svg>
<div style="left:535px;top:48px;width:9px;height:348px;background:#3c3c3c;"></div>
<div style="left:163px;top:63px;width:242px;height:327px;background:#ffffff;"></div>
<div style="left:180px;top:98px;width:207px;height:258px;background:#646464;"></div>
<svg style="left:0;top:0" width="705" height="407"><g fill="#ffffff" fill-rule="evenodd"><path d="M188.5 105.8 H214 C226 105.8 233.3 111 233.3 121.5 C233.3 129 229 134 223 136.5 C232 138.5 238.1 145 238.1 154.5 C238.1 166 229 171.9 216 171.9 H188.5 Z M201.7 116.3 H212 C217 116.3 219.4 119 219.4 124.3 C219.4 129.5 216.5 132.6 211 132.6 H201.7 Z M201.7 143.1 H214 C220.5 143.1 224.1 146.5 224.1 152.2 C224.1 158 220.5 161.3 213.5 161.3 H201.7 Z"/><path d="M269.8 105.8 H295.7 V116.9 H290.9 V161 H295.7 V171.9 H269.8 V161 H275.5 V116.9 H269.8 Z"/><path d="M324 105.8 H350 C364.5 105.8 371.4 113 371.4 125 C371.4 134 367.5 140 361 143 L379 171.9 H360.8 L349.3 146 H338.8 V171.9 H324 Z M338.8 116.3 H349 C354.5 116.3 357 119.5 357 125.8 C357 132 354 135.5 348.5 135.5 H338.8 Z"/><path d="M188.9 191.9 H241 V203.8 H224.1 V258 H207.4 V203.8 H188.9 Z"/><path d="M254.5 191.9 H269.4 V218.7 H297.7 V191.9 H312.6 V258 H297.7 V231.2 H269.4 V258 H254.5 Z"/><path d="M320 191.9 H344 C365 191.9 378.1 204 378.1 225 C378.1 246 365 258 344 258 H320 Z M334.9 205.3 H343 C356 205.3 363 212 363 225 C363 238 356 244.6 343 244.6 H334.9 Z"/><path d="M274.1 272.9 H291.1 L314.7 338.6 H301 L297 322.9 H270.1 L265.6 338.6 H252.9 Z M282.3 283.7 L291.7 313.1 H274.1 Z"/><path d="M322.5 272.9 H338.6 L350.7 301.3 L363.1 272.9 H378.8 L357.2 311 V338.6 H342.5 V311 Z"/></g></svg>
<div style="left:23px;top:396px;width:521px;height:11px;background:#4a4a4a;"></div>
<div style="left:24px;top:396px;width:26px;height:9px;background:#383838;"></div>
<span style="left:25px;top:397.5px;font-size:7px;color:#c8c8c8;">36.08%</span>
<div style="left:50px;top:396px;width:117px;height:9px;background:#4e4e4e;"></div>
<div style="left:52px;top:397px;width:11px;height:6px;background:#c8c8c8;border-radius:1px;"></div>
<svg style="left:52px;top:397px" width="11" height="6"><circle cx="3" cy="3" r="1.8" fill="#333"/><circle cx="7.5" cy="2" r="1" fill="#333"/><circle cx="8.5" cy="4" r="1.2" fill="#333"/></svg>
<svg style="left:0;top:0" width="705" height="407"><path transform="translate(85.00,397.32) scale(0.627)" d="M1 1.6 L2.4 2.8 M0.8 5 H2.6 V8.6 L9.6 9.6 M4.4 1 H9.4 M4.4 3.6 H9.4 M6.8 0.6 V8 M4.4 6 H9.4" fill="none" stroke="#c8c8c8" stroke-width="1.0" stroke-linecap="square"/><path transform="translate(91.60,397.32) scale(0.627)" d="M0.8 1.4 H9.4 M2 3.2 V6 H8.2 V3.2 Z M5 1.4 V9.6 M1.2 8.2 H9" fill="none" stroke="#c8c8c8" stroke-width="1.0" stroke-linecap="square"/><text x="98.20" y="403" font-size="6.6" font-family="Liberation Sans" fill="#c8c8c8" xml:space="preserve">:5.51M/15.3M</text></svg>
<svg style="left:160px;top:397.5px" width="5" height="6"><path d="M0 0 L5 3 L0 6Z" fill="#dedede"/></svg>
<div style="left:167px;top:396px;width:368px;height:9px;background:#414141;"></div>
<div style="left:535px;top:396px;width:9px;height:9px;background:#545454;"></div>
<div style="left:544px;top:37px;width:161px;height:370px;background:#333333;"></div>
<div style="left:545px;top:37px;width:160px;height:6px;background:#383838;"></div>
<svg style="left:559.5px;top:38.5px" width="5" height="4"><path d="M0 2 L2.2 0 V4Z M2.6 2 L4.8 0 V4Z" fill="#b0b0b0"/></svg>
<svg style="left:694.5px;top:38.5px" width="5" height="4"><path d="M2.2 2 L0 0 V4Z M4.8 2 L2.6 0 V4Z" fill="#b0b0b0"/></svg>
<div style="left:545px;top:44px;width:21px;height:22px;background:#535353;"></div>
<div style="left:545px;top:67px;width:21px;height:22px;background:#535353;"></div>
<div style="left:545px;top:90px;width:21px;height:317px;background:#535353;"></div>
<svg style="left:545px;top:44px" width="21" height="46"><g stroke="#383838" stroke-dasharray="1 1" stroke-width="1.2"><path d="M5 2.5 H16 M5 25.5 H16"/></g><g fill="#d0d0d0"><rect x="7.5" y="8.5" width="3" height="2.5" fill="none" stroke="#d0d0d0" stroke-width="0.8"/><rect x="7.5" y="12" width="3" height="2.5" fill="none" stroke="#d0d0d0" stroke-width="0.8"/><rect x="7.5" y="15.5" width="3" height="2.5"/><path d="M11.5 8 q3.5 1.5 1.5 8 l-1 -1.2" fill="none" stroke="#d0d0d0" stroke-width="1.1"/><path d="M11 7 l2 1 l-1.5 1.2z"/></g><g fill="#d0d0d0"><path d="M6.5 32 l2.5 -1.3 l2.5 1.3 v3 l-2.5 1.3 l-2.5 -1.3z" fill="#bbb" stroke="#d8d8d8" stroke-width="0.7"/><rect x="13" y="30.5" width="2" height="2"/><rect x="13" y="34" width="2" height="2"/><rect x="6.5" y="38.5" width="9" height="1.6"/></g></svg>
<div style="left:702px;top:37px;width:3px;height:370px;background:#363636;"></div>
<div style="left:568px;top:43px;width:134px;height:10px;background:#3f3f3f;"></div>
<div style="left:568px;top:43px;width:20px;height:10px;background:#535353;"></div>
<svg style="left:0;top:0" width="705" height="407"><path transform="translate(571.00,44.98) scale(0.665)" d="M1 2 H9 M5 0.4 V5.2 M1.8 5.2 H8.2 M3.2 7 L1.2 9.6 M6.8 7 L9 9.6 M1.4 7.2 H8.6" fill="none" stroke="#dedede" stroke-width="1.0" stroke-linecap="square"/><path transform="translate(578.00,44.98) scale(0.665)" d="M1.8 0.6 V9.6 M0.6 3 H3.2 M4.4 1 H9.4 V4.8 H4.4 Z M4.4 6.2 H9.6 M5.2 6.2 L4.4 9.6 M8.6 6.2 L9.6 9.6" fill="none" stroke="#dedede" stroke-width="1.0" stroke-linecap="square"/></svg>
<div style="left:588px;top:43px;width:21px;height:10px;background:#474747;"></div>
<svg style="left:0;top:0" width="705" height="407"><path transform="translate(591.00,44.98) scale(0.665)" d="M1.8 0.6 V9.6 M0.6 3 H3.2 M4.4 1 H9.4 V4.8 H4.4 Z M4.4 6.2 H9.6 M5.2 6.2 L4.4 9.6 M8.6 6.2 L9.6 9.6" fill="none" stroke="#a0a0a0" stroke-width="1.0" stroke-linecap="square"/><path transform="translate(598.00,44.98) scale(0.665)" d="M0.8 1.4 H9.4 M2 3.2 V6 H8.2 V3.2 Z M5 1.4 V9.6 M1.2 8.2 H9" fill="none" stroke="#a0a0a0" stroke-width="1.0" stroke-linecap="square"/></svg>
<div style="left:609px;top:43px;width:1px;height:10px;background:#363636;"></div>
<svg style="left:691px;top:45px" width="10" height="6"><path d="M0 1.5h3l-1.5 2z" fill="#ddd"/><path d="M4 1.5h5M4 3.5h5M4 5.5h5" stroke="#9a9a9a" stroke-width="0.9"/></svg>
<div style="left:568px;top:53px;width:134px;height:63px;background:#535353;"></div>
<div style="left:576.5px;top:65.5px;width:10.5px;height:10.5px;background:#ffffff;outline:0.5px solid #777;"></div>
<div style="left:571px;top:60px;width:10px;height:10px;background:#f39700;outline:1px solid #9a8a70;"></div>
<span style="left:591.3px;top:60.3px;font-size:7px;color:#c8c8c8;">R</span>
<span style="left:591.3px;top:74.3px;font-size:7px;color:#c8c8c8;">G</span>
<span style="left:591.3px;top:88.3px;font-size:7px;color:#c8c8c8;">B</span>
<div style="left:600px;top:61px;width:63px;height:3px;background:linear-gradient(90deg,#009700,#f39700);"></div>
<div style="left:600px;top:75px;width:63px;height:3px;background:linear-gradient(90deg,#f30000,#f3ff00);"></div>
<div style="left:600px;top:89px;width:63px;height:3px;background:linear-gradient(90deg,#f39700,#f397ff);"></div>
<svg style="left:656.5px;top:65.5px" width="7" height="5"><path d="M3.5 0.3 L6.3 2.8 V4 H0.7 V2.8 Z" fill="#c0c0c0" stroke="#3a3a3a" stroke-width="0.6"/></svg>
<svg style="left:633.5px;top:79.5px" width="7" height="5"><path d="M3.5 0.3 L6.3 2.8 V4 H0.7 V2.8 Z" fill="#c0c0c0" stroke="#3a3a3a" stroke-width="0.6"/></svg>
<svg style="left:596.5px;top:93.5px" width="7" height="5"><path d="M3.5 0.3 L6.3 2.8 V4 H0.7 V2.8 Z" fill="#c0c0c0" stroke="#3a3a3a" stroke-width="0.6"/></svg>
<div style="left:667px;top:59.5px;width:21px;height:10px;background:#3b3b3b;"></div>
<span style="left:669px;top:61.0px;font-size:8px;color:#e6e6e6;">243</span>
<div style="left:667px;top:73.5px;width:21px;height:10px;background:#3b3b3b;"></div>
<span style="left:669px;top:75.0px;font-size:8px;color:#e6e6e6;">151</span>
<div style="left:667px;top:87.5px;width:21px;height:10px;background:#3b3b3b;"></div>
<span style="left:669px;top:89.0px;font-size:8px;color:#e6e6e6;">0</span>
<div style="left:570px;top:104px;width:118px;height:8.5px;background:linear-gradient(180deg,rgba(255,255,255,0.75) 0%,rgba(255,255,255,0) 45%,rgba(0,0,0,0) 50%,rgba(0,0,0,0.8) 100%),linear-gradient(90deg,#e8141c,#f0e800 18%,#10a030 38%,#10a0e0 56%,#101090 70%,#d01080 84%,#e8141c);"></div>
<div style="left:688px;top:104px;width:4px;height:4px;background:#ffffff;"></div>
<div style="left:688px;top:108px;width:4px;height:4.5px;background:#000000;"></div>
<div style="left:568px;top:116px;width:134px;height:1px;background:#3a3a3a;"></div>
<div style="left:568px;top:117px;width:134px;height:10px;background:#3f3f3f;"></div>
<div style="left:568px;top:117px;width:20px;height:10px;background:#535353;"></div>
<svg style="left:0;top:0" width="705" height="407"><path transform="translate(571.00,118.98) scale(0.665)" d="M2.6 0.8 L1 3.8 M2 2.8 V9.6 M4.2 1.8 H9.6 M4.2 4.6 H9.6 M4.8 6.8 H9.2 V9.4 H4.8 Z M7 0.6 V6.8" fill="none" stroke="#dedede" stroke-width="1.0" stroke-linecap="square"/><path transform="translate(578.00,118.98) scale(0.665)" d="M0.8 1.4 H9.4 M2 3.2 V6 H8.2 V3.2 Z M5 1.4 V9.6 M1.2 8.2 H9" fill="none" stroke="#dedede" stroke-width="1.0" stroke-linecap="square"/></svg>
<div style="left:588px;top:117px;width:21px;height:10px;background:#474747;"></div>
<svg style="left:0;top:0" width="705" height="407"><path transform="translate(591.00,118.98) scale(0.665)" d="M1 2 H9 M5 0.4 V5.2 M1.8 5.2 H8.2 M3.2 7 L1.2 9.6 M6.8 7 L9 9.6 M1.4 7.2 H8.6" fill="none" stroke="#a0a0a0" stroke-width="1.0" stroke-linecap="square"/><path transform="translate(598.00,118.98) scale(0.665)" d="M1 2 H9 M5 0.4 V5.2 M1.8 5.2 H8.2 M3.2 7 L1.2 9.6 M6.8 7 L9 9.6 M1.4 7.2 H8.6" fill="none" stroke="#a0a0a0" stroke-width="1.0" stroke-linecap="square"/></svg>
<div style="left:609px;top:117px;width:1px;height:10px;background:#363636;"></div>
<svg style="left:691px;top:119px" width="10" height="6"><path d="M0 1.5h3l-1.5 2z" fill="#ddd"/><path d="M4 1.5h5M4 3.5h5M4 5.5h5" stroke="#9a9a9a" stroke-width="0.9"/></svg>
<div style="left:568px;top:127px;width:134px;height:63px;background:#535353;"></div>
<svg style="left:0;top:0" width="705" height="407"><path transform="translate(573.00,131.98) scale(0.665)" d="M1 1.6 L2.4 2.8 M0.8 5 H2.6 V8.6 L9.6 9.6 M4.4 1 H9.4 M4.4 3.6 H9.4 M6.8 0.6 V8 M4.4 6 H9.4" fill="none" stroke="#d8d8d8" stroke-width="1.0" stroke-linecap="square"/><path transform="translate(580.00,131.98) scale(0.665)" d="M1.8 0.6 V9.6 M0.6 3 H3.2 M4.4 1 H9.4 V4.8 H4.4 Z M4.4 6.2 H9.6 M5.2 6.2 L4.4 9.6 M8.6 6.2 L9.6 9.6" fill="none" stroke="#d8d8d8" stroke-width="1.0" stroke-linecap="square"/><path transform="translate(587.00,131.98) scale(0.665)" d="M2.6 0.8 L1 3.8 M2 2.8 V9.6 M4.2 1.8 H9.6 M4.2 4.6 H9.6 M4.8 6.8 H9.2 V9.4 H4.8 Z M7 0.6 V6.8" fill="none" stroke="#d8d8d8" stroke-width="1.0" stroke-linecap="square"/><path transform="translate(594.00,131.98) scale(0.665)" d="M0.8 1.4 H9.4 M2 3.2 V6 H8.2 V3.2 Z M5 1.4 V9.6 M1.2 8.2 H9" fill="none" stroke="#d8d8d8" stroke-width="1.0" stroke-linecap="square"/></svg>
<svg style="left:0;top:0" width="705" height="407"><defs><linearGradient id="sqg" x1="0" y1="0" x2="1" y2="1"><stop offset="0" stop-color="#9a9a9a"/><stop offset="1" stop-color="#6a6a6a"/></linearGradient></defs><circle cx="598.5" cy="148.5" r="2.5" fill="#d4d4d4"/><path d="M598.5 143.5v2 M598.5 151.5v2 M593.5 148.5h2 M601.5 148.5h2 M595 145.0l1.2 1.2 M600.8 150.8l1.2 1.2 M595 152.0l1.2 -1.2 M600.8 146.2l1.2 -1.2" stroke="#d4d4d4" stroke-width="0.9"/><path d="M607.5 152.5 V149.5 L609 147.5 L610.5 149.5 L612 145.5 L613.5 148.5 L615 146.5 L617.5 149.5 V152.5 Z" fill="#d4d4d4"/><rect x="622.0" y="144.5" width="9" height="8" fill="url(#sqg)" stroke="#cfcfcf" stroke-width="0.9"/><path d="M622 153.0 L631 144.0" stroke="#d4d4d4"/><rect x="635.0" y="144.5" width="9" height="8" fill="url(#sqg)" stroke="#cfcfcf" stroke-width="0.9"/><path d="M635 153.0 L644 144.0 V153.0 Z" fill="#333"/><path d="M635 153.0 L644 144.0" stroke="#d4d4d4"/><path d="M648.5 144.0 H657.5 L653 153.0 Z" fill="#777" stroke="#d4d4d4" stroke-width="1"/><path d="M650.5 146.0 H655.5 L653 150.5 Z" fill="#ccc"/><rect x="588.0" y="160" width="9" height="8" fill="url(#sqg)" stroke="#cfcfcf" stroke-width="0.9"/><rect x="588" y="159.5" width="9" height="3" fill="#d4d4d4"/><rect x="589" y="164" width="7" height="3.5" fill="#999"/><path d="M606 160 V167 M602 161.5 H610 M602 161.5 L600.5 165 H603.5 Z M610 161.5 L608.5 165 H611.5 Z M603.5 167.8 H608.5" fill="#d4d4d4" stroke="#d4d4d4" stroke-width="0.8"/><rect x="615.0" y="160" width="9" height="8" fill="url(#sqg)" stroke="#cfcfcf" stroke-width="0.9"/><rect x="619.5" y="159.5" width="4.5" height="9" fill="#d4d4d4"/><rect x="628" y="159.5" width="8" height="6" fill="#777" stroke="#d4d4d4" stroke-width="0.9"/><circle cx="635.5" cy="166" r="3" fill="#555" stroke="#d4d4d4" stroke-width="0.9"/><circle cx="646.5" cy="162" r="2.5" fill="#d4d4d4"/><circle cx="644.5" cy="165.5" r="2.5" fill="#cfcfcf"/><circle cx="648.5" cy="165.5" r="2.5" fill="#bbb"/><rect x="655.5" y="160" width="9" height="8" fill="url(#sqg)" stroke="#cfcfcf" stroke-width="0.9"/><path d="M657 159.5V168.5 M660 159.5V168.5 M663 159.5V168.5 M655.5 162.5h9" stroke="#d4d4d4" stroke-width="0.7"/><rect x="595.0" y="175.3" width="9" height="8" fill="url(#sqg)" stroke="#cfcfcf" stroke-width="0.9"/><circle cx="599.5" cy="179.3" r="3" fill="none" stroke="#d4d4d4"/><path d="M596 182.3 L603 176.3" stroke="#d4d4d4"/><rect x="608.0" y="175.3" width="9" height="8" fill="url(#sqg)" stroke="#cfcfcf" stroke-width="0.9"/><path d="M608 183.3 L617 175.3" stroke="#d4d4d4" stroke-width="2"/><rect x="621.5" y="175.3" width="9" height="8" fill="url(#sqg)" stroke="#cfcfcf" stroke-width="0.9"/><path d="M621.5 181.3 L630.5 176.3" stroke="#d4d4d4" stroke-width="2.5"/><rect x="635.0" y="175.3" width="9" height="8" fill="url(#sqg)" stroke="#cfcfcf" stroke-width="0.9"/><path d="M635 174.8 L639.5 179.3 L635 183.8 Z M644 174.8 L639.5 179.3 L644 183.8 Z" fill="#d4d4d4"/><defs><linearGradient id="ag" x1="0" x2="1"><stop offset="0" stop-color="#444"/><stop offset="1" stop-color="#eee"/></linearGradient></defs><rect x="648.5" y="174.8" width="9" height="9" fill="url(#ag)" stroke="#d4d4d4" stroke-width="0.9"/></svg>
<div style="left:568px;top:190px;width:134px;height:1px;background:#3a3a3a;"></div>
<div style="left:568px;top:191px;width:134px;height:10px;background:#3f3f3f;"></div>
<div style="left:568px;top:191px;width:20px;height:10px;background:#535353;"></div>
<svg style="left:0;top:0" width="705" height="407"><path transform="translate(571.00,192.98) scale(0.665)" d="M2.6 0.8 L1 3.8 M2 2.8 V9.6 M4.2 1.8 H9.6 M4.2 4.6 H9.6 M4.8 6.8 H9.2 V9.4 H4.8 Z M7 0.6 V6.8" fill="none" stroke="#dedede" stroke-width="1.0" stroke-linecap="square"/><path transform="translate(578.00,192.98) scale(0.665)" d="M2.6 0.8 L1 3.8 M2 2.8 V9.6 M4.2 1.8 H9.6 M4.2 4.6 H9.6 M4.8 6.8 H9.2 V9.4 H4.8 Z M7 0.6 V6.8" fill="none" stroke="#dedede" stroke-width="1.0" stroke-linecap="square"/></svg>
<div style="left:588px;top:191px;width:21px;height:10px;background:#474747;"></div>
<svg style="left:0;top:0" width="705" height="407"><path transform="translate(591.00,192.98) scale(0.665)" d="M1.8 0.6 V9.6 M0.6 3 H3.2 M4.4 1 H9.4 V4.8 H4.4 Z M4.4 6.2 H9.6 M5.2 6.2 L4.4 9.6 M8.6 6.2 L9.6 9.6" fill="none" stroke="#a0a0a0" stroke-width="1.0" stroke-linecap="square"/><path transform="translate(598.00,192.98) scale(0.665)" d="M1.8 0.6 V9.6 M0.6 3 H3.2 M4.4 1 H9.4 V4.8 H4.4 Z M4.4 6.2 H9.6 M5.2 6.2 L4.4 9.6 M8.6 6.2 L9.6 9.6" fill="none" stroke="#a0a0a0" stroke-width="1.0" stroke-linecap="square"/></svg>
<div style="left:609px;top:191px;width:1px;height:10px;background:#363636;"></div>
<div style="left:609px;top:191px;width:21px;height:10px;background:#474747;"></div>
<svg style="left:0;top:0" width="705" height="407"><path transform="translate(612.00,192.98) scale(0.665)" d="M0.8 1.4 H9.4 M2 3.2 V6 H8.2 V3.2 Z M5 1.4 V9.6 M1.2 8.2 H9" fill="none" stroke="#a0a0a0" stroke-width="1.0" stroke-linecap="square"/><path transform="translate(619.00,192.98) scale(0.665)" d="M1.8 0.6 V9.6 M0.6 3 H3.2 M4.4 1 H9.4 V4.8 H4.4 Z M4.4 6.2 H9.6 M5.2 6.2 L4.4 9.6 M8.6 6.2 L9.6 9.6" fill="none" stroke="#a0a0a0" stroke-width="1.0" stroke-linecap="square"/></svg>
<div style="left:630px;top:191px;width:1px;height:10px;background:#363636;"></div>
<svg style="left:691px;top:193px" width="10" height="6"><path d="M0 1.5h3l-1.5 2z" fill="#ddd"/><path d="M4 1.5h5M4 3.5h5M4 5.5h5" stroke="#9a9a9a" stroke-width="0.9"/></svg>
<div style="left:568px;top:201px;width:134px;height:194px;background:#535353;"></div>
<div style="left:570.5px;top:204px;width:38px;height:10px;background:#5a5a5a;border:1px solid #3d3d3d;box-sizing:border-box;border-radius:2px;"></div>
<svg style="left:573px;top:206px" width="8" height="7"><circle cx="4.5" cy="3" r="2.2" fill="none" stroke="#ddd" stroke-width="0.9"/><path d="M3 4.5 L1 6.5" stroke="#ddd"/></svg>
<svg style="left:0;top:0" width="705" height="407"><path transform="translate(582.00,205.98) scale(0.665)" d="M1.8 0.6 V9.6 M0.6 3 H3.2 M4.4 1 H9.4 V4.8 H4.4 Z M4.4 6.2 H9.6 M5.2 6.2 L4.4 9.6 M8.6 6.2 L9.6 9.6" fill="none" stroke="#e0e0e0" stroke-width="1.0" stroke-linecap="square"/><path transform="translate(589.00,205.98) scale(0.665)" d="M0.8 1.4 H9.4 M2 3.2 V6 H8.2 V3.2 Z M5 1.4 V9.6 M1.2 8.2 H9" fill="none" stroke="#e0e0e0" stroke-width="1.0" stroke-linecap="square"/></svg>
<svg style="left:604px;top:206px" width="4" height="7"><path d="M0 2.5L2 0L4 2.5Z M0 4.5L2 7L4 4.5Z" fill="#ccc"/></svg>
<svg style="left:0;top:0" width="705" height="407"><rect x="621.5" y="206" width="7.5" height="6" fill="none" stroke="#c8c8c8" stroke-width="0.8"/><path d="M623 211 l2 -2 l1.5 1.5 l1 -1 v1.5z" fill="#c8c8c8"/><circle cx="638.5" cy="209" r="3" fill="#c8c8c8"/><path d="M636.5 211 L640.5 207" stroke="#555" stroke-width="1.2"/><text x="652" y="212.5" font-size="9" font-family="Liberation Serif" fill="#c8c8c8" text-anchor="middle">T</text><rect x="662" y="206" width="6" height="6" fill="none" stroke="#c8c8c8" stroke-width="0.8"/><path d="M661 205.5h2 M667 205.5h2 M661 212.5h2 M667 212.5h2" stroke="#c8c8c8" stroke-width="1"/><path d="M676.5 206 h3 l1.5 1.5 v5 h-4.5z" fill="none" stroke="#c8c8c8" stroke-width="0.8"/><rect x="674.5" y="209" width="3.5" height="3.5" fill="#c8c8c8"/><rect x="695" y="204.5" width="5.5" height="9" rx="1" fill="#3a3a3a"/><rect x="695.5" y="205" width="4.5" height="3.5" fill="#6a6a6a"/></svg>
<div style="left:570.5px;top:219px;width:61px;height:11px;background:#5a5a5a;border:1px solid #3d3d3d;box-sizing:border-box;border-radius:2px;"></div>
<svg style="left:0;top:0" width="705" height="407"><path transform="translate(574.00,221.98) scale(0.665)" d="M0.8 1.4 H9.4 M2 3.2 V6 H8.2 V3.2 Z M5 1.4 V9.6 M1.2 8.2 H9" fill="none" stroke="#e0e0e0" stroke-width="1.0" stroke-linecap="square"/><path transform="translate(581.00,221.98) scale(0.665)" d="M1 1.6 L2.4 2.8 M0.8 5 H2.6 V8.6 L9.6 9.6 M4.4 1 H9.4 M4.4 3.6 H9.4 M6.8 0.6 V8 M4.4 6 H9.4" fill="none" stroke="#e0e0e0" stroke-width="1.0" stroke-linecap="square"/></svg>
<svg style="left:625px;top:221px" width="4" height="7"><path d="M0 2.5L2 0L4 2.5Z M0 4.5L2 7L4 4.5Z" fill="#ccc"/></svg>
<svg style="left:0;top:0" width="705" height="407"><path transform="translate(636.00,221.98) scale(0.665)" d="M1 0.8 H9.2 V9.6 H1 Z M3 3 H7.2 M3.2 5 L7 8 M7 5 L3.2 8" fill="none" stroke="#d0d0d0" stroke-width="1.0" stroke-linecap="square"/><path transform="translate(643.00,221.98) scale(0.665)" d="M1 2 H9 M5 0.4 V5.2 M1.8 5.2 H8.2 M3.2 7 L1.2 9.6 M6.8 7 L9 9.6 M1.4 7.2 H8.6" fill="none" stroke="#d0d0d0" stroke-width="1.0" stroke-linecap="square"/><path transform="translate(650.00,221.98) scale(0.665)" d="M1.8 0.6 V9.6 M0.6 3 H3.2 M4.4 1 H9.4 V4.8 H4.4 Z M4.4 6.2 H9.6 M5.2 6.2 L4.4 9.6 M8.6 6.2 L9.6 9.6" fill="none" stroke="#d0d0d0" stroke-width="1.0" stroke-linecap="square"/><path transform="translate(657.00,221.98) scale(0.665)" d="M2.6 0.8 L1 3.8 M2 2.8 V9.6 M4.2 1.8 H9.6 M4.2 4.6 H9.6 M4.8 6.8 H9.2 V9.4 H4.8 Z M7 0.6 V6.8" fill="none" stroke="#d0d0d0" stroke-width="1.0" stroke-linecap="square"/><text x="664.00" y="228" font-size="7" font-family="Liberation Sans" fill="#d0d0d0" xml:space="preserve">:</text></svg>
<div style="left:669px;top:219px;width:19px;height:11px;background:#3b3b3b;"></div>
<span style="left:670px;top:222px;font-size:6.5px;color:#dedede;">100%</span>
<div style="left:689px;top:219px;width:9px;height:11px;background:#626262;border:1px solid #444;box-sizing:border-box;"></div>
<svg style="left:691px;top:223px" width="5" height="3"><path d="M0 0H5L2.5 3Z" fill="#ddd"/></svg>
<svg style="left:0;top:0" width="705" height="407"><path transform="translate(571.00,237.98) scale(0.665)" d="M1 2 H9 M5 0.4 V5.2 M1.8 5.2 H8.2 M3.2 7 L1.2 9.6 M6.8 7 L9 9.6 M1.4 7.2 H8.6" fill="none" stroke="#d0d0d0" stroke-width="1.0" stroke-linecap="square"/><path transform="translate(578.00,237.98) scale(0.665)" d="M3.4 0.4 L1 3 M2.6 1.8 H8 L6.8 4.2 M1.8 4.4 H8.6 V7 H1.8 Z M1.8 7 V9.4 H9.6" fill="none" stroke="#d0d0d0" stroke-width="1.0" stroke-linecap="square"/><text x="585.00" y="244" font-size="7" font-family="Liberation Sans" fill="#d0d0d0" xml:space="preserve">:</text></svg>
<svg style="left:0;top:0" width="705" height="407"><rect x="592.5" y="238" width="6.5" height="6.5" fill="#888" stroke="#c8c8c8" stroke-width="0.6"/><rect x="593" y="238.5" width="2.8" height="2.8" fill="#e6e6e6"/><rect x="595.8" y="241.3" width="2.8" height="2.8" fill="#e6e6e6"/><path d="M604.5 244.5 q0.5 -2.5 2.5 -2 l5 -5.5 l0.8 0.8 l-5 5.5 q0 2 -3.3 1.2z" fill="#c8c8c8"/><path d="M620 237v8 M616 241h8 M618.8 238.2l1.2 -1.2l1.2 1.2 M618.8 243.8l1.2 1.2l1.2 -1.2 M617.2 239.8l-1.2 1.2l1.2 1.2 M622.8 239.8l1.2 1.2l-1.2 1.2" fill="none" stroke="#c8c8c8" stroke-width="0.8"/><rect x="629.5" y="240.5" width="6" height="4.5" fill="#c8c8c8"/><path d="M630.8 240.5 v-1.8 a1.7 1.7 0 0 1 3.4 0 v1.8" fill="none" stroke="#c8c8c8" stroke-width="1"/></svg>
<svg style="left:0;top:0" width="705" height="407"><path transform="translate(650.00,237.98) scale(0.665)" d="M1 0.8 H9.2 V9.6 H1 Z M3 3 H7.2 M3.2 5 L7 8 M7 5 L3.2 8" fill="none" stroke="#d0d0d0" stroke-width="1.0" stroke-linecap="square"/><path transform="translate(657.00,237.98) scale(0.665)" d="M1 1.6 L2.4 2.8 M0.8 5 H2.6 V8.6 L9.6 9.6 M4.4 1 H9.4 M4.4 3.6 H9.4 M6.8 0.6 V8 M4.4 6 H9.4" fill="none" stroke="#d0d0d0" stroke-width="1.0" stroke-linecap="square"/><text x="664.00" y="244" font-size="7" font-family="Liberation Sans" fill="#d0d0d0" xml:space="preserve">:</text></svg>
<div style="left:669px;top:235px;width:19px;height:11px;background:#3b3b3b;"></div>
<span style="left:670px;top:238px;font-size:6.5px;color:#dedede;">100%</span>
<div style="left:689px;top:235px;width:9px;height:11px;background:#626262;border:1px solid #444;box-sizing:border-box;"></div>
<svg style="left:691px;top:239px" width="5" height="3"><path d="M0 0H5L2.5 3Z" fill="#ddd"/></svg>
<div style="left:568px;top:249px;width:134px;height:1px;background:#3e3e3e;"></div>
<div style="left:568px;top:250px;width:125px;height:23px;background:#535353;"></div>
<div style="left:693px;top:250px;width:9px;height:145px;background:#4a4a4a;"></div>
<div style="left:585px;top:250px;width:1px;height:77px;background:#474747;"></div>
<div style="left:568px;top:273px;width:125px;height:1px;background:#444444;"></div>
<div style="left:568px;top:283px;width:125px;height:1px;background:#444444;"></div>
<div style="left:572px;top:256.5px;width:8px;height:7.5px;background:#4a4a4a;border:1px solid #3e3e3e;box-sizing:border-box;"></div>
<svg style="left:587px;top:251px" width="14" height="18"><defs><pattern id="ck" width="4" height="4" patternUnits="userSpaceOnUse"><rect width="4" height="4" fill="#fff"/><rect width="2" height="2" fill="#ccc"/><rect x="2" y="2" width="2" height="2" fill="#ccc"/></pattern></defs><rect x="0" y="0" width="14" height="18" fill="url(#ck)"/><g fill="#f39700" font-family="Liberation Sans" font-weight="bold" font-size="5" text-anchor="middle"><text x="7" y="6">BIR</text><text x="7" y="11">THD</text><text x="7" y="16"> AY</text></g></svg>
<svg style="left:0;top:0" width="705" height="407"><text x="606.50" y="263.5" font-size="7" font-family="Liberation Sans" fill="#d8d8d8" xml:space="preserve">Y </text><path transform="translate(613.11,257.48) scale(0.665)" d="M0.8 1.4 H9.4 M2 3.2 V6 H8.2 V3.2 Z M5 1.4 V9.6 M1.2 8.2 H9" fill="none" stroke="#d8d8d8" stroke-width="1.0" stroke-linecap="square"/><path transform="translate(620.11,257.48) scale(0.665)" d="M1 1.6 L2.4 2.8 M0.8 5 H2.6 V8.6 L9.6 9.6 M4.4 1 H9.4 M4.4 3.6 H9.4 M6.8 0.6 V8 M4.4 6 H9.4" fill="none" stroke="#d8d8d8" stroke-width="1.0" stroke-linecap="square"/></svg>
<div style="left:572px;top:274.5px;width:8px;height:7px;background:#4a4a4a;border:1px solid #3e3e3e;box-sizing:border-box;"></div>
<svg style="left:588px;top:274px" width="16" height="8"><path d="M0.5 1 L4 4 L0.5 7Z" fill="#e0e0e0"/><path d="M6 1.5 h3 l1 1 h5 v5 h-9z" fill="#cfcfcf"/></svg>
<svg style="left:0;top:0" width="705" height="407"><path transform="translate(609.00,274.48) scale(0.665)" d="M1 0.8 H9.2 V9.6 H1 Z M3 3 H7.2 M3.2 5 L7 8 M7 5 L3.2 8" fill="none" stroke="#d8d8d8" stroke-width="1.0" stroke-linecap="square"/><text x="616.00" y="280.5" font-size="7" font-family="Liberation Sans" fill="#d8d8d8" xml:space="preserve"> 1</text></svg>
<div style="left:568px;top:284px;width:125px;height:21px;background:#687a94;"></div>
<svg style="left:571px;top:290px" width="10" height="7"><path d="M0.5 3.5 Q5 -1 9.5 3.5 Q5 8 0.5 3.5Z" fill="none" stroke="#e8e8e8" stroke-width="0.9"/><circle cx="5" cy="3.5" r="1.4" fill="#e8e8e8"/></svg>
<svg style="left:585px;top:284.5px" width="18" height="21"><rect x="0.5" y="0.5" width="17" height="20" fill="#2c2c2c" stroke="#dcdcdc" stroke-width="0.8"/><rect x="2" y="2" width="14" height="17" fill="url(#ck)"/><g fill="#3a3a3a" font-family="Liberation Sans" font-weight="bold" font-size="5" text-anchor="middle"><text x="9" y="7.2">BIR</text><text x="9" y="12.4">THD</text><text x="9.5" y="17.6"> AY</text></g><rect x="2.5" y="2.5" width="13" height="16" fill="none" stroke="#444" stroke-width="0.8"/></svg>
<svg style="left:0;top:0" width="705" height="407"><path transform="translate(606.00,291.48) scale(0.665)" d="M2.6 0.8 L1 3.8 M2 2.8 V9.6 M4.2 1.8 H9.6 M4.2 4.6 H9.6 M4.8 6.8 H9.2 V9.4 H4.8 Z M7 0.6 V6.8" fill="none" stroke="#f0f0f0" stroke-width="1.0" stroke-linecap="square"/><path transform="translate(613.00,291.48) scale(0.665)" d="M2.6 0.8 L1 3.8 M2 2.8 V9.6 M4.2 1.8 H9.6 M4.2 4.6 H9.6 M4.8 6.8 H9.2 V9.4 H4.8 Z M7 0.6 V6.8" fill="none" stroke="#f0f0f0" stroke-width="1.0" stroke-linecap="square"/><text x="620.00" y="297.5" font-size="7" font-family="Liberation Sans" fill="#f0f0f0" xml:space="preserve"> 1</text></svg>
<div style="left:568px;top:305px;width:125px;height:1px;background:#444444;"></div>
<svg style="left:571px;top:314px" width="10" height="7"><path d="M0.5 3.5 Q5 -1 9.5 3.5 Q5 8 0.5 3.5Z" fill="none" stroke="#d8d8d8" stroke-width="0.9"/><circle cx="5" cy="3.5" r="1.4" fill="#d8d8d8"/></svg>
<div style="left:587.5px;top:308px;width:12.5px;height:16.5px;background:#ffffff;outline:0.5px solid #888;"></div>
<svg style="left:0;top:0" width="705" height="407"><path transform="translate(606.00,314.48) scale(0.665) skewX(-10)" d="M3.4 0.4 L1 3 M2.6 1.8 H8 L6.8 4.2 M1.8 4.4 H8.6 V7 H1.8 Z M1.8 7 V9.4 H9.6" fill="none" stroke="#d8d8d8" stroke-width="1.0" stroke-linecap="square"/><path transform="translate(613.00,314.48) scale(0.665) skewX(-10)" d="M2.6 0.8 L1 3.8 M2 2.8 V9.6 M4.2 1.8 H9.6 M4.2 4.6 H9.6 M4.8 6.8 H9.2 V9.4 H4.8 Z M7 0.6 V6.8" fill="none" stroke="#d8d8d8" stroke-width="1.0" stroke-linecap="square"/></svg>
<svg style="left:676px;top:312px" width="8" height="9"><rect x="0.5" y="4" width="7" height="4.5" fill="none" stroke="#d0d0d0" stroke-width="0.9"/><path d="M2 4 v-1.5 a2 2 0 0 1 4 0 v1.5" fill="none" stroke="#d0d0d0" stroke-width="0.9"/></svg>
<div style="left:568px;top:327px;width:125px;height:1px;background:#474747;"></div>
<svg style="left:0;top:0" width="705" height="407"><ellipse cx="590.5" cy="370.5" rx="9.6" ry="8.2" fill="#e2e2e2"/><path d="M583.5 376 L582 381.5 L588 378Z" fill="#e2e2e2"/><circle cx="587" cy="368.6" r="1.3" fill="#535353"/><circle cx="594.5" cy="368.6" r="1.3" fill="#535353"/><ellipse cx="600" cy="378.6" rx="9.3" ry="7.8" fill="#535353"/><ellipse cx="600" cy="378.6" rx="8.3" ry="6.9" fill="#e2e2e2"/><path d="M604.5 383 L606.5 386.5 L601.5 384.5Z" fill="#e2e2e2"/><circle cx="596.8" cy="376.8" r="1.2" fill="#535353"/><circle cx="603.2" cy="376.8" r="1.2" fill="#535353"/></svg>
<svg style="left:0;top:0" width="705" height="407"><g fill="none" stroke="#e4e4e4" stroke-width="1.5" stroke-linecap="round" stroke-linejoin="round"><path d="M613 371.7 H618.8 M616.3 367.8 V384.2 M616.3 372.5 L612.8 380 M616.8 374 L618.8 376.5 M619.2 369.6 H626 M621.2 369.6 V375 Q621 381 618.8 384.2 M626 369.6 L624 374.6 H628.6 L621.5 384 M623.8 377.8 L629 384.2"/><path d="M632.6 367.8 L629.6 372.2 M632.8 372.6 L629.4 377.8 M631.3 375.3 V384.2 M634.3 368.5 V371 H639.5 V368.5 M636.9 367.6 V371 M633.6 373.2 H640.2 M635 375.5 H639.5 V381.5 M635 375.5 V380 Q634.8 383 633.8 384.2 M637.2 377.5 V381 M642.5 367.8 L641 373 M641.8 371 H646.5 M645.8 371.5 Q644.5 379 640.5 384.2 M642 376 L646.8 384.2"/><path d="M648.8 368.5 L650.8 370.6 M647.8 374.5 H650.6 V382.5 L652.6 380.6 M655.2 368.5 V372 Q655 374.5 652.8 375.3 M655.2 368.5 H659.6 V372.5 Q659.8 374 662.8 374 M653.5 376.2 H661.6 Q659 381 652.8 384.2 M655.2 378.2 Q658 382 663.6 384"/><path d="M666.5 368.5 L668.6 370.6 M665.8 374.5 H668.8 V382.2 L670.8 380.2 M670.6 374.4 H681.2 M676.4 367.8 V384.2"/></g></svg>
<div style="left:568px;top:395px;width:134px;height:12px;background:#4c4c4c;"></div>
<div style="left:568px;top:395px;width:134px;height:1px;background:#3f3f3f;"></div>
<svg style="left:0;top:0" width="705" height="407"><path d="M591 398.7 h-1.2 a1.8 1.8 0 0 0 0 3.6 h1.2 M594 398.7 h1.2 a1.8 1.8 0 0 1 0 3.6 h-1.2 M591 400.5 h3" fill="none" stroke="#8a8a8a" stroke-width="0.9"/><text x="608.5" y="403.5" font-size="8" font-style="italic" font-family="Liberation Serif" fill="#bdbdbd" text-anchor="middle">fx.</text><rect x="619" y="397.7" width="7.5" height="5.6" fill="#bdbdbd"/><circle cx="622.7" cy="400.5" r="1.7" fill="#444"/><circle cx="638.5" cy="400.5" r="3" fill="#bdbdbd"/><path d="M636.5 402.5 L640.5 398.5" stroke="#555" stroke-width="1.1"/><rect x="642" y="403.0" width="1" height="1" fill="#999"/><path d="M649 397.5 h3 l1 1 h3.5 v5 h-7.5z" fill="#bdbdbd"/><path d="M664.5 397.3 h6.5 v6.5 h-6.5z" fill="#bdbdbd"/><path d="M664.5 401.0 h3 v3" fill="none" stroke="#555" stroke-width="0.9"/><path d="M680 398.7 h5.5 l-0.6 5.3 h-4.3z M679 397.7 h7.5 M681.5 396.9 h2.5" fill="#bdbdbd" stroke="#bdbdbd" stroke-width="0.7"/></svg>
<svg style="left:0;top:0" width="705" height="407"><rect x="567.5" y="248.5" width="18" height="23.5" rx="2" fill="none" stroke="#ff2020" stroke-width="1.6"/><path d="M544.7 393.5 L561.6 284.2 L558.6 284.6 L566.7 275.6 L570 285 L566.6 284.3 L546.1 393.5 Q545.4 394.6 544.7 393.5 Z" fill="#ff1a1a"/></svg>
</body></html>
